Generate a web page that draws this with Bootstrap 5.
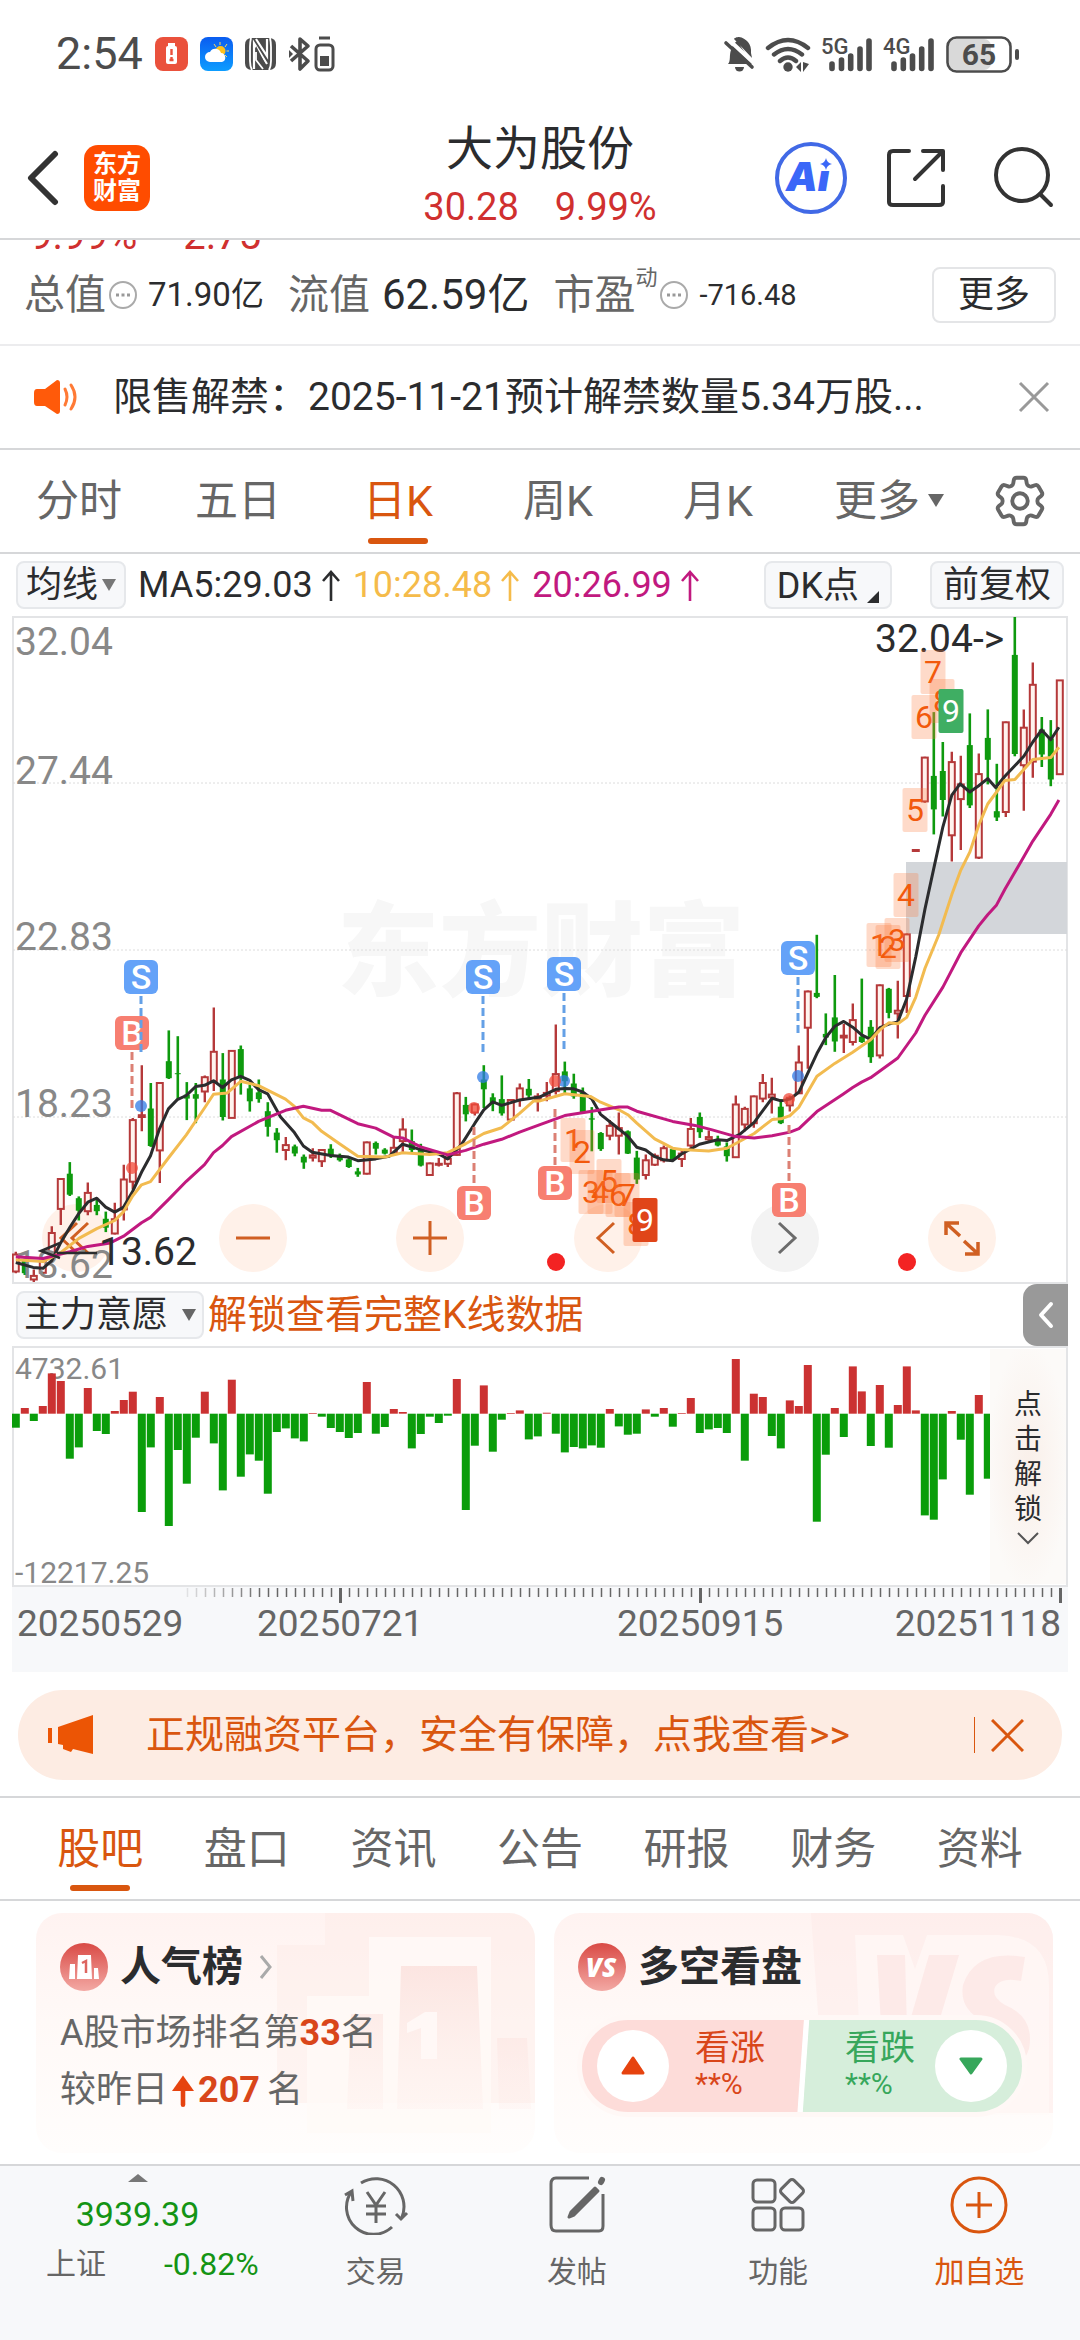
<!DOCTYPE html>
<html lang="zh-CN">
<head>
<meta charset="utf-8">
<meta name="viewport" content="width=device-width, initial-scale=1">
<title>大为股份 30.28 9.99%</title>
<link href="https://cdn.jsdelivr.net/npm/bootstrap@5.3.0/dist/css/bootstrap.min.css" rel="stylesheet">
<style>
:root{--ink:#2b2c2e;--mute:#666;--brand:#d9560f;--up:#d0302f;--down:#149414;--line:#d6d7d9}
body{font-family:Roboto,"Noto Sans CJK SC",sans-serif;color:var(--ink);background:#fff;font-size:36px;line-height:46px}
svg{display:block;flex:none}
button,a{background:none;border:0;padding:0;color:inherit;text-decoration:none;font:inherit}
.rule{border-bottom:2px solid var(--line)}
.up{color:var(--up)}.down{color:var(--down)}.brand{color:var(--brand)}.mute{color:var(--mute)}
.gap-l12{margin-left:12px}.gap-l16{margin-left:16px}.gap-l32{margin-left:32px}.gap-l38{margin-left:38px}.gap-l52{margin-left:52px}
.status{padding:34px 60px 32px 56px;color:#4c4c4c;font-size:45px;line-height:40px}
.topbar{display:grid;grid-template-columns:1fr auto 1fr;align-items:center;padding:14px 26px 2px;height:134px}
.topbar .name{font-size:47px;line-height:58px}
.topbar .quote{font-size:38px;line-height:58px;gap:36px}
.applogo{width:66px;height:66px;border-radius:14px;background:#ff4c00;color:#fff;font-size:24px;font-weight:700;line-height:27px;padding-top:6px;text-align:center}
.peek{height:14px;overflow:hidden;padding-left:30px;gap:46px;font-size:40px;line-height:36px}
.stats{padding:0 24px 8px;height:90px}
.stats .lbl{font-size:41px;color:var(--mute)}
.stats sup{font-size:22px;line-height:24px;top:-24px;color:var(--mute)}
.tipdot{margin:0 10px 0 2px}
.s28{font-size:29px}.s33{font-size:33px}.s42{font-size:42px}
.outbtn{border:2px solid #e4e5e7;border-radius:8px;width:124px;height:56px;font-size:36px;line-height:50px}
.notice{height:106px;padding:0 30px 0 33px;font-size:39px;border-top:2px solid #ececee}
.ktabs{display:grid;grid-template-columns:158fr 160fr 160fr 160fr 160fr 182fr 80fr;height:104px;padding-right:20px;font-size:43px;align-items:center;justify-items:center;color:var(--mute)}
.tabitem{position:relative;line-height:102px}
.tabitem.on{color:var(--brand)}
.tabitem.on::after{content:"";position:absolute;left:50%;bottom:8px;width:60px;height:6px;margin-left:-30px;border-radius:3px;background:var(--brand)}
.chip{background:#f7f8fa;border:2px solid #e6e8eb;border-radius:8px;height:48px;line-height:42px;font-size:36px;padding:0 8px}
.chip.wide{padding:0 11px}
.marow{height:62px;padding:0 16px;font-size:36px}
.ma10{color:#f5bb4a}.ma20{color:#c1197f}
.panel{margin:0 12px;position:relative}
.panel>svg{position:relative;pointer-events:none;width:100%;height:auto}
.ctl{position:absolute;left:30px;right:72px;bottom:12px;display:flex;justify-content:space-between}
.ctl button{width:68px;height:68px;border-radius:50%;background:#fff1e9;color:#d05f22}
.ctl button svg{width:68px;height:68px}
.ctl button.off{background:#f3f3f3;color:#6b6b6b}
.subrow{height:62px;padding-left:16px;font-size:39px}
.subrow .chip{gap:14px;padding:0 6px}
.drawer{width:45px;height:62px;background:#999;border-radius:14px 0 0 14px;display:grid;place-items:center;margin-right:12px}
.unlock{position:absolute;right:2px;top:3px;bottom:3px;width:76px;background:radial-gradient(ellipse at 50% 50%,#f9efe9,#fcfaf8 75%);font-size:28px;line-height:35px;display:flex;flex-direction:column;align-items:center;justify-content:center}
.unlock span{width:28px;word-break:break-all}
.promo{margin:18px 18px 16px;height:90px;border-radius:45px;background:#fdece3;color:var(--brand);padding:0 38px 0 30px;font-size:39px}
.promo .bar{width:1px;height:36px;background:var(--brand)}
.sectabs{border-top:2px solid var(--line);padding:0 27px;height:105px;font-size:43px;color:var(--mute)}
.sectabs a{flex:1;text-align:center}
.tiles{padding:12px 27px 11px 36px;display:grid;grid-template-columns:1fr 1fr;gap:19px}
.tile{position:relative;border-radius:26px;overflow:hidden;height:240px;padding:30px 24px 0;background:linear-gradient(#fff3f1,#fff9f7 45%,#fffdfc)}
.tile .art{position:absolute;right:0;top:0}
.tile>*:not(.art){position:relative}
.tile h2{font-size:41px;font-weight:700;line-height:48px;margin:0 0 0 12px}
.tile p{margin:0;font-size:36px;line-height:57px;color:var(--mute)}
.tile .rank{margin-top:14px}
.tile p b{color:#d9461a}
.tile p .step{margin:0 7px 0 4px}
.vote{margin:24px 0 0 -1px;height:102px;border-radius:51px;border:5px solid #fff8f6;overflow:hidden;background:linear-gradient(94deg,#fddcd9 49.6%,#fff 49.8%,#fff 50.8%,#d6eedb 51%);width:450px;padding:0 15px;font-size:35px;line-height:36px}
.vote button{width:72px;height:72px;border-radius:50%;background:#fff;display:grid;place-items:center}
.vote .red{color:#d9461a;margin-left:26px}.vote .green{color:#37a75b;margin-right:20px}
.vote .pct{font-size:30px;line-height:34px;display:block}
.dock{border-top:2px solid var(--line);background:#f7f8fa;height:176px;color:var(--mute);font-size:30px}
.dock .item{flex:1;display:flex;flex-direction:column;align-items:center;padding-top:9px;gap:14px}
.dock .index{width:275px;padding-top:8px;line-height:38px}
.dock .level{font-size:34px;margin:13px 0 12px}
.dock .change{font-size:32px}
.dock .pair{padding-left:46px;gap:58px}
</style>
<script src="https://cdn.jsdelivr.net/npm/bootstrap@5.3.0/dist/js/bootstrap.bundle.min.js"></script>
</head>
<body>
<div class="status d-flex align-items-center justify-content-between">
  <div class="d-flex align-items-center">
    <span>2:54</span>
    <svg class="gap-l12" width="33" height="34" viewBox="0 0 33 34"><rect width="33" height="34" rx="8" fill="#ea513c"/><rect x="13" y="6" width="7" height="3" fill="#fff"/><rect x="11" y="9" width="11" height="18" rx="2" fill="#fff"/><path d="M16.500 12v6M16.500 20v2M14.500 23h4" stroke="#ea513c" stroke-width="2.400"/></svg>
    <svg class="gap-l12" width="33" height="34" viewBox="0 0 33 34"><defs><linearGradient id="sky" x2="0" y2="1"><stop stop-color="#0a5cf0"/><stop offset="1" stop-color="#0d9dff"/></linearGradient></defs><rect width="33" height="34" rx="8" fill="url(#sky)"/><g stroke="#ffd75a" stroke-width="1"><path d="M20 5v3M14 7l2 3M27 7l-2 3M29 14h-2.500M27 20l-2-2"/></g><circle cx="20.500" cy="14" r="5" fill="#ffc21c"/><path d="M10 25a5 5 0 0 1 0-10 6 6 0 0 1 11 1 4.600 4.600 0 0 1 1 9z" fill="#fff"/></svg>
    <svg class="gap-l12" width="31" height="32" viewBox="0 0 31 32"><path d="M7 0h17q7 0 7 7v18q0 7-7 7H7q-7 0-7-7V7q0-7 7-7z" fill="#4c4c4c"/><path d="M6 0q-1 4-1 9v14q0 5 2 9M25 0q1 4 1 9v14q0 5-2 9" stroke="#fff" stroke-width="1.800" fill="none"/><path d="M9 31V5l13 21M22 1v17L11 1" fill="none" stroke="#fff" stroke-width="2.200"/><path d="M11 8v8l9 15h3z" fill="#4c4c4c"/><path d="M11 14v8l7 9" fill="none" stroke="#fff" stroke-width="1.800"/></svg>
    <svg class="gap-l12" width="48" height="36" viewBox="0 0 48 36" fill="none" stroke="#4c4c4c" stroke-width="3.600" stroke-linejoin="round"><path d="M3 10l17 15-8 8V3l8 7-17 15"/><path d="M1 14l4 4-4 4z" fill="#4c4c4c" stroke="none"/><rect x="28" y="9" width="17" height="25" rx="4" stroke-width="3"/><path d="M31 2h11" stroke-width="3"/><rect x="32" y="20" width="9" height="10" fill="#4c4c4c" stroke="none"/></svg>
  </div>
  <svg width="298" height="38" viewBox="721 34 298 38" fill="#4c4c4c"><path d="M727 63c3-3 1-9 3-14 1-4 3-7 6-9l13 19c1 2 2 3 2 4zM733 38c0-1 3-2 5-2 7 1 13 7 12 16l1 5z"/><path d="M734 66h9a4 4 0 0 1-9 0z"/><path d="M727 38l28 26" stroke="#fff" stroke-width="4"/><path d="M725 42l26 24" stroke="#4c4c4c" stroke-width="3.600" stroke-linecap="round"/>
  <g fill="none" stroke="#4c4c4c" stroke-width="4.400" stroke-linecap="round"><path d="M767 47q20-16 40 0M773 53.500q14-11 28 0M779 60q8-7 16 0"/></g><circle cx="787" cy="66" r="4.700"/><path d="M795 66l5-5v10zM802 61v10l6-8z"/>
  <text x="820" y="53" font-size="22" font-weight="500">5G</text><text x="882" y="53" font-size="22" font-weight="500">4G</text>
  <g stroke="#4c4c4c" stroke-width="5.600" stroke-linecap="round"><path d="M831 63v4.500M840.500 59v8.500M849.700 55v12.500M859 48v19.500M868 40v27.500M893 63v4.500M902.300 59v8.500M911.500 55v12.500M920.700 48v19.500M930 40v27.500"/></g>
  <rect x="948" y="38" width="42" height="31" rx="7" fill="#d9d9d9"/><rect x="946.500" y="36.500" width="63" height="34" rx="9" fill="none" stroke="#4c4c4c" stroke-width="2.600"/><rect x="1014" y="48" width="4" height="11" rx="2"/><text x="978" y="64" font-size="30" font-weight="700" text-anchor="middle">65</text></svg>
</div>

<header class="topbar rule">
  <div class="d-flex align-items-center">
    <button aria-label="返回"><svg width="34" height="56" viewBox="0 0 34 56" fill="none" stroke="#333" stroke-width="6" stroke-linecap="round" stroke-linejoin="round"><path d="M29 4L5 28l24 24"/></svg></button>
    <div class="applogo ms-4">东方<br>财富</div>
  </div>
  <div class="text-center">
    <div class="name">大为股份</div>
    <div class="quote up d-flex justify-content-center"><span>30.28</span><span>9.99%</span></div>
  </div>
  <div class="d-flex align-items-center justify-content-end">
    <button aria-label="AI"><svg width="74" height="74" viewBox="0 0 74 74"><circle cx="37" cy="37" r="34" fill="none" stroke="#4169e6" stroke-width="4"/><text x="12" y="50" font-family="Inter" font-weight="900" font-style="italic" font-size="40" fill="#3a67f8">Ai</text><rect x="44" y="17" width="18" height="13" fill="#fff"/><path d="M52 17q1 5 6 6-5 1-6 6-1-5-6-6 5-1 6-6z" fill="#3a67f8"/></svg></button>
    <button class="gap-l38" aria-label="分享"><svg width="60" height="60" viewBox="0 0 60 60" fill="none" stroke="#333" stroke-width="4" stroke-linecap="round" stroke-linejoin="round"><path d="M23 3H7q-4 0-4 4v47q0 3 4 3h46q4 0 4-3V38M37 3h20v19M56 4L29 31"/></svg></button>
    <button class="ms-5" aria-label="搜索"><svg width="60" height="62" viewBox="1 0 60 62" fill="none" stroke="#333" stroke-width="4" stroke-linecap="round"><circle cx="29" cy="28" r="26"/><path d="M47 47l11 11"/></svg></button>
  </div>
</header>

<div class="peek up d-flex align-items-end"><span>9.99%</span><span>2.75</span></div>

<div class="stats d-flex align-items-center">
  <span class="lbl">总值</span><svg class="tipdot" width="30" height="30" viewBox="0 0 30 30"><circle cx="15" cy="15" r="13" fill="none" stroke="#aaa" stroke-width="2"/><path d="M8 15h3M13.500 15h3M19 15h3" stroke="#999" stroke-width="3"/></svg><span class="s33">71.90亿</span>
  <span class="lbl ms-4">流值</span><span class="s42 gap-l12">62.59亿</span>
  <span class="lbl ms-4">市盈<sup>动</sup></span><svg class="tipdot" width="30" height="30" viewBox="0 0 30 30"><circle cx="15" cy="15" r="13" fill="none" stroke="#aaa" stroke-width="2"/><path d="M8 15h3M13.500 15h3M19 15h3" stroke="#999" stroke-width="3"/></svg><span class="s28">-716.48</span>
  <button class="outbtn ms-auto">更多</button>
</div>
<div class="notice rule d-flex align-items-center">
  <svg width="48" height="38" viewBox="0 0 48 38"><path d="M4 11h8L24 2q3 0 3 3v28q0 3-3 3L12 28H4q-3 0-3-4v-9q0-4 3-4z" fill="#ff5a0a"/><path d="M32 11q4 8 0 16M38 7q8 12 0 24" fill="none" stroke="#ff7a35" stroke-width="3" stroke-linecap="round"/></svg>
  <span class="text-truncate gap-l32">限售解禁：2025-11-21预计解禁数量5.34万股...</span>
  <button class="ms-auto" aria-label="关闭"><svg width="32" height="32" viewBox="0 0 32 32" stroke="#999" stroke-width="3"><path d="M2 2l28 28M30 2L2 30"/></svg></button>
</div>

<nav class="ktabs rule">
  <a class="tabitem" href="#">分时</a><a class="tabitem" href="#">五日</a><a class="tabitem on" href="#">日K</a><a class="tabitem" href="#">周K</a><a class="tabitem" href="#">月K</a>
  <a class="tabitem d-flex align-items-center gap-2" href="#">更多<svg width="16" height="14" viewBox="0 0 16 14"><path d="M0 0h16L8 13z" fill="#666"/></svg></a>
  <button aria-label="设置"><svg width="62" height="62" viewBox="0 0 24 24" fill="none" stroke="#666" stroke-width="1.500"><path d="M9.594 3.940c.09-.542.56-.94 1.110-.94h2.593c.55 0 1.020.398 1.110.94l.213 1.281c.063.374.313.686.645.87.074.04.147.083.22.127.325.196.72.257 1.075.124l1.217-.456a1.125 1.125 0 0 1 1.370.49l1.296 2.247a1.125 1.125 0 0 1-.26 1.431l-1.003.827c-.293.241-.438.613-.43.992a7.723 7.723 0 0 1 0 .255c-.008.378.137.75.43.991l1.004.827c.424.35.534.955.26 1.430l-1.298 2.247a1.125 1.125 0 0 1-1.369.491l-1.217-.456c-.355-.133-.75-.072-1.076.124a6.470 6.470 0 0 1-.22.128c-.331.183-.581.495-.644.869l-.213 1.281c-.09.543-.56.94-1.110.94h-2.594c-.55 0-1.019-.398-1.110-.94l-.213-1.281c-.062-.374-.312-.686-.644-.87a6.520 6.520 0 0 1-.22-.127c-.325-.196-.72-.257-1.076-.124l-1.217.456a1.125 1.125 0 0 1-1.369-.49l-1.297-2.247a1.125 1.125 0 0 1 .26-1.431l1.004-.827c.292-.24.437-.613.43-.991a6.932 6.932 0 0 1 0-.255c.007-.38-.138-.751-.43-.992l-1.004-.827a1.125 1.125 0 0 1-.26-1.430l1.297-2.247a1.125 1.125 0 0 1 1.370-.491l1.216.456c.356.133.751.072 1.076-.124.072-.044.146-.086.22-.128.332-.183.582-.495.644-.869l.214-1.280Z"/><circle cx="12" cy="12" r="3"/></svg></button>
</nav>

<div class="marow d-flex align-items-center">
  <button class="chip d-flex align-items-center gap-1">均线<svg width="14" height="12" viewBox="0 0 14 12"><path d="M0 0h14L7 12z" fill="#777"/></svg></button>
  <span class="gap-l12">MA5:29.03</span><svg class="ms-2" width="20" height="32" viewBox="0 0 20 32" fill="none" stroke="#2b2c2e" stroke-width="2.600"><path d="M10 32V3M2 12l8-9 8 9"/></svg>
  <span class="gap-l12 ma10">10:28.48</span><svg class="ms-2" width="20" height="32" viewBox="0 0 20 32" fill="none" stroke="#f5bb4a" stroke-width="2.600"><path d="M10 32V3M2 12l8-9 8 9"/></svg>
  <span class="gap-l12 ma20">20:26.99</span><svg class="ms-2" width="20" height="32" viewBox="0 0 20 32" fill="none" stroke="#c1197f" stroke-width="2.600"><path d="M10 32V3M2 12l8-9 8 9"/></svg>
  <button class="chip wide ms-auto d-flex align-items-end">DK点<svg class="ms-2 mb-1" width="12" height="12" viewBox="0 0 12 12"><path d="M12 0v12H0z" fill="#2b2c2e"/></svg></button>
  <button class="chip wide gap-l38">前复权</button>
</div>

<section class="panel">
  <div class="ctl">
    <button aria-label="最早"><svg viewBox="0 0 68 68" fill="none" stroke="currentColor" stroke-width="3"><path d="M35 19L19 34l16 15M46 19L30 34l16 15"/></svg></button>
    <button aria-label="缩小"><svg viewBox="0 0 68 68" stroke="currentColor" stroke-width="3"><path d="M17 34h34"/></svg></button>
    <button aria-label="放大"><svg viewBox="0 0 68 68" stroke="currentColor" stroke-width="3"><path d="M17 34h34M34 17v34"/></svg></button>
    <button aria-label="向左"><svg viewBox="0 0 68 68" fill="none" stroke="currentColor" stroke-width="3"><path d="M40 19L24 34l16 15"/></svg></button>
    <button class="off" aria-label="向右"><svg viewBox="0 0 68 68" fill="none" stroke="currentColor" stroke-width="3"><path d="M28 19l16 15-16 15"/></svg></button>
    <button aria-label="全屏"><svg viewBox="0 0 68 68" fill="none" stroke="currentColor" stroke-width="3.500"><path d="M18 31V19h13M19 20l13 12M50 38v12H37M49 49L36 37"/></svg></button>
  </div>
  <svg id="kchart" viewBox="12 616 1056 668"></svg>
</section>

<div class="subrow d-flex align-items-center">
  <button class="chip d-flex align-items-center">主力意愿<svg width="14" height="12" viewBox="0 0 14 12"><path d="M0 0h14L7 12z" fill="#666"/></svg></button>
  <a class="brand ms-1" href="#">解锁查看完整K线数据</a>
  <button class="drawer ms-auto" aria-label="展开"><svg width="18" height="28" viewBox="0 0 18 28" fill="none" stroke="#fff" stroke-width="4" stroke-linecap="round" stroke-linejoin="round"><path d="M14 3L4 14l10 11"/></svg></button>
</div>

<section class="panel">
  <svg id="vchart" viewBox="12 1345 1056 241"></svg>
  <button class="unlock"><span>点击解锁</span><svg width="24" height="20" viewBox="0 0 24 20" fill="none" stroke="#555" stroke-width="2"><path d="M2 6l10 10L22 6"/></svg></button>
</section>
<section class="panel"><svg id="axis" viewBox="12 1586 1056 85"></svg></section>

<div class="promo d-flex align-items-center">
  <svg width="46" height="40" viewBox="0 0 46 40" fill="#ec5505"><path d="M10 12L45 0v39l-20-5-2 3-8-3v-4l-5-1zM0 13h4v15H0z"/></svg>
  <a class="gap-l52" href="#">正规融资平台，安全有保障，点我查看&gt;&gt;</a>
  <span class="bar ms-auto"></span>
  <button class="gap-l16" aria-label="关闭"><svg width="33" height="33" viewBox="0 0 33 33" stroke="#d9560f" stroke-width="3"><path d="M1 1l31 31M32 1L1 32"/></svg></button>
</div>

<nav class="sectabs rule d-flex">
  <a class="tabitem on" href="#">股吧</a><a class="tabitem" href="#">盘口</a><a class="tabitem" href="#">资讯</a><a class="tabitem" href="#">公告</a><a class="tabitem" href="#">研报</a><a class="tabitem" href="#">财务</a><a class="tabitem" href="#">资料</a>
</nav>

<div class="tiles">
  <div class="tile">
    <svg class="art" width="258" height="240" viewBox="0 0 258 240"><defs><linearGradient id="fade" x2="0" y2="1"><stop stop-color="#f9d5d0" stop-opacity=".55"/><stop offset="1" stop-color="#fde9e6" stop-opacity=".25"/></linearGradient></defs><path d="M48 0h210v190H0V32h48z" fill="#fdeae7" opacity=".45"/><path d="M30 83h62V24h122v196H30z" fill="#fffaf8" opacity=".8"/><path d="M124 53h76l6 143h-86zM74 101h32v95H70zM220 125h30l4 71h-32z" fill="url(#fade)"/><path d="M160 99v47h-16v-31l-14 5v-10l18-11z" fill="#fff8f6"/></svg>
    <div class="d-flex align-items-center">
      <svg width="48" height="48" viewBox="0 0 48 48"><defs><linearGradient id="badge" x2="0" y2="1"><stop stop-color="#d94a45"/><stop offset="1" stop-color="#f3a9a4"/></linearGradient></defs><circle cx="24" cy="24" r="24" fill="url(#badge)"/><path d="M18 12h13l1 24H17zM10 21h5v15H9zM34 25h4l1 11h-5z" fill="#fff"/><path d="M22 20l4-2v12" stroke="#dd6560" stroke-width="2.500" fill="none"/></svg>
      <h2>人气榜</h2>
      <svg class="gap-l16" width="14" height="26" viewBox="0 0 14 26" fill="none" stroke="#aaa" stroke-width="3"><path d="M2 2l9 11-9 11"/></svg>
    </div>
    <p class="rank">A股市场排名第<b>33</b>名</p>
    <p class="d-flex align-items-center">较昨日<svg class="ms-1" width="22" height="34" viewBox="0 0 24 34"><path d="M12 0l12 17H0z" fill="#e6430f"/><path d="M12 14v18" stroke="#e6430f" stroke-width="5" stroke-linecap="round"/></svg><b class="step">207</b>名</p>
  </div>
  <div class="tile">
    <svg class="art" width="242" height="240" viewBox="0 0 242 240"><path d="M0 0h242v200H14z" fill="#fdeae7" opacity=".5"/><path d="M44 22h48l12 34 12-34h72q50 2 50 50v130H52z" fill="#fffaf8" opacity=".6"/><path d="M66 42h28l2 76 22-76h30l-42 140H74zM214 44q-50-8-62 28-4 24 20 36 16 8 10 18-8 14-40 6l-6 34q66 14 82-30 6-32-24-44-14-8-10-18 6-10 26-6z" fill="#f9d5d0" opacity=".35"/></svg>
    <div class="d-flex align-items-center">
      <svg width="48" height="48" viewBox="0 0 48 48"><circle cx="24" cy="24" r="24" fill="url(#badge)"/><text x="23" y="34" font-size="26" font-weight="900" font-style="italic" fill="#fff" text-anchor="middle" font-family="Open Sans">VS</text></svg>
      <h2>多空看盘</h2>
    </div>
    <div class="vote d-flex align-items-center">
      <button aria-label="看涨"><svg width="24" height="20" viewBox="0 0 24 20"><path d="M12 2l10 15H2z" fill="#e6430f" stroke="#e6430f" stroke-width="3" stroke-linejoin="round"/></svg></button>
      <div class="red">看涨<span class="pct">**%</span></div>
      <div class="green ms-auto">看跌<span class="pct">**%</span></div>
      <button aria-label="看跌"><svg width="24" height="20" viewBox="0 0 24 20"><path d="M12 17L2 3h20z" fill="#37a75b" stroke="#37a75b" stroke-width="3" stroke-linejoin="round"/></svg></button>
    </div>
  </div>
</div>

<nav class="dock d-flex">
  <a class="index" href="#">
    <svg class="mx-auto" width="20" height="8" viewBox="0 0 20 8"><path d="M10 0l10 8H0z" fill="#777"/></svg>
    <div class="level down text-center">3939.39</div>
    <div class="pair d-flex"><span>上证</span><span class="change down">-0.82%</span></div>
  </a>
  <a class="item" href="#"><svg width="66" height="60" viewBox="0 0 66 60" fill="none" stroke="#666" stroke-width="3"><path d="M18 8A28 28 0 0 1 59 42M49 52A27 27 0 0 1 9 16M2 20l7-4 1 10M53 39l5 5 6-6M24 17l9 13 9-13M23 31h20M23 39h20M33 30v18"/></svg>交易</a>
  <a class="item" href="#"><svg width="60" height="60" viewBox="0 0 60 60" fill="none" stroke="#666" stroke-width="3"><path d="M42 3H9Q4 3 4 9v41q0 6 5 6h43q4 0 4-5V19"/><path d="M54 7l1-2" stroke-width="6" stroke-linecap="round"/><path d="M48 13L24 37l-2 5 5-2 24-24z" fill="#666" stroke-linejoin="round"/></svg>发帖</a>
  <a class="item" href="#"><svg width="60" height="60" viewBox="0 0 60 60" fill="none" stroke="#666" stroke-width="3"><rect x="5" y="5" width="22" height="22" rx="4"/><rect x="5" y="33" width="22" height="22" rx="4"/><rect x="33" y="33" width="22" height="22" rx="4"/><rect x="35" y="7" width="18" height="18" rx="3" transform="rotate(45 44 16)"/></svg>功能</a>
  <a class="item brand" href="#"><svg width="60" height="60" viewBox="0 0 60 60" fill="none" stroke="#d9560f" stroke-width="3"><circle cx="30" cy="30" r="27"/><path d="M17 30h26M30 17v26"/></svg>加自选</a>
</nav>

<script>
// candles: type (r rising, g falling), high, body top, body bottom, low
const K=`r1460,1466,1504,1508 g1475,1478,1508,1512 r1500,1514,1522,1528 r1475,1480,1507,1510 r1403,1418,1462,1465 r1297,1297,1364,1400 g1259,1285,1332,1335 g1336,1340,1368,1390 r1305,1328,1369,1378 g1343,1355,1369,1378 g1370,1386,1406,1416 r1350,1387,1419,1421 r1265,1298,1365,1390 r1160,1165,1303,1320 r1042,1154,1158,1190 g1082,1139,1223,1225 r1080,1082,1233,1306 g964,1033,1071,1073 g977,1060,1061,1118 g1080,1108,1117,1165 g1082,1107,1117,1172 r1065,1069,1101,1125 r913,1012,1078,1100 g1015,1074,1158,1166 r1010,1010,1160,1160 g998,1006,1071,1108 g1085,1094,1123,1146 g1074,1103,1118,1126 g1125,1145,1180,1202 g1183,1193,1210,1238 r1203,1221,1232,1255 g1220,1224,1240,1246 g1242,1247,1260,1274 r1228,1244,1249,1258 r1230,1232,1257,1270 g1219,1229,1244,1250 g1240,1246,1255,1258 g1250,1253,1270,1272 g1272,1280,1287,1292 r1213,1215,1285,1287 g1213,1216,1229,1242 g1228,1231,1240,1242 r1205,1227,1240,1242 r1161,1186,1212,1240 g1186,1212,1232,1240 g1218,1228,1267,1269 r1260,1262,1288,1290 r1250,1263,1265,1269 r1240,1252,1263,1270 r1102,1105,1243,1245 g1113,1131,1152,1168 r1128,1130,1148,1155 g1042,1074,1096,1138 g1105,1114,1128,1145 g1065,1118,1150,1155 r1118,1120,1164,1166 r1083,1094,1120,1135 g1073,1095,1110,1118 r1105,1112,1118,1146 r1080,1104,1110,1123 r951,1062,1100,1108 g1034,1056,1078,1105 g1061,1083,1112,1117 g1092,1104,1148,1150 g1136,1161,1164,1235 g1192,1194,1230,1234 r1165,1178,1200,1210 r1148,1183,1200,1242 g1188,1190,1240,1241 g1234,1249,1298,1308 r1242,1255,1288,1298 r1240,1245,1265,1268 r1222,1228,1255,1260 g1228,1230,1253,1255 r1232,1240,1252,1270 r1160,1185,1222,1228 g1148,1158,1192,1205 r1188,1203,1208,1213 g1200,1209,1222,1224 g1215,1224,1246,1258 r1110,1130,1248,1250 r1135,1140,1175,1190 r1110,1112,1172,1182 r1062,1082,1117,1125 r1070,1108,1114,1150 g1118,1135,1172,1174 r1110,1115,1132,1146 r998,1036,1105,1105 r875,877,958,1050 g750,880,889,892 g926,972,980,997 g840,935,989,1012 r950,976,980,1015 r904,941,990,998 g848,978,990,992 g941,956,1024,1037 r861,863,1020,1027 g869,871,925,937 r853,920,926,982 r747,749,887,925 r560,560,562,562 r351,353,451,454 g251,394,469,525 g318,383,448,485 r340,363,527,586 r349,413,446,560 g254,325,460,466 r344,390,577,580 g245,309,358,413 g367,473,487,495 r272,274,475,486 g38,123,345,350 r245,286,370,472 r140,190,362,398 g262,290,346,374 g269,310,402,417 r180,180,390,390`.split(' ');
const MA={
'#2b2c2e':['46,1484 96,1495 125,1497 150,1480 176,1440 203,1405 229,1374 255,1349 281,1340 307,1360 333,1371 359,1360 385,1325 411,1282 437,1245 463,1185 489,1140 515,1119 541,1110 568,1090 594,1087 620,1077 646,1092 672,1075 699,1067 725,1076 751,1097 777,1106 815,1158 855,1193 881,1223 907,1237 960,1244 1012,1248 1039,1256 1091,1252 1130,1246 1169,1219 1222,1231 1274,1241 1300,1252 1340,1220 1379,1172 1405,1142 1431,1124 1457,1132 1509,1120','0,1113 46,1096 72,1094 98,1095 124,1102 150,1117 176,1152 229,1185 255,1201 281,1226 307,1232 333,1247 359,1254 385,1256 411,1241 463,1219 516,1209 543,1211 580,1197 622,1170 674,1116 700,1122 726,1118 752,1102 804,1016 830,980 856,955 882,944 908,957 934,974 960,984 987,958 1013,950 1039,945 1065,893 1091,800 1118,692 1144,600 1170,508 1196,437 1220,412 1248,430 1274,416 1300,400 1323,420 1350,395 1405,350 1431,318 1457,291 1483,313 1507,285'],
'#f2bb50':['46,1478 125,1482 176,1462 229,1430 281,1408 333,1390 359,1370 385,1335 411,1310 437,1303 489,1250 541,1198 594,1138 620,1107 660,1104 699,1078 751,1088 829,1118 855,1134 881,1160 907,1170 934,1190 986,1218 1039,1246 1117,1248 1169,1238 1248,1242 1300,1238 1352,1218 1405,1195 1457,1182 1509,1150 1550,1122','0,1122 72,1106 146,1112 176,1125 229,1142 255,1153 281,1172 333,1207 385,1228 411,1231 490,1234 543,1228 622,1195 674,1164 700,1162 726,1155 752,1136 804,1067 856,1038 908,1013 960,985 987,963 1013,947 1039,949 1065,935 1091,890 1118,825 1158,750 1196,660 1222,605 1248,565 1274,505 1300,457 1326,430 1350,404 1379,402 1431,357 1483,353 1507,330'],
'#c1197f':['46,1471 125,1475 203,1460 255,1448 320,1440 359,1425 411,1395 437,1383 489,1343 541,1302 594,1265 620,1238 646,1222 672,1202 751,1168 829,1143 881,1134 934,1143 960,1143 1039,1173 1091,1183 1143,1203 1169,1205 1222,1225 1300,1243 1352,1233 1405,1219 1457,1208 1509,1192','0,1175 72,1155 146,1146 229,1136 255,1136 281,1145 385,1168 450,1177 500,1187 569,1202 622,1205 674,1200 726,1192 752,1184 804,1146 880,1107 908,1092 934,1080 960,1070 1039,1026 1091,970 1118,930 1170,867 1222,790 1274,730 1300,705 1326,683 1350,648 1405,575 1431,540 1483,480 1507,448']};
const Y=v=>600+v/2.24, f=v=>v.toFixed(1);
let s='<rect x="13" y="617" width="1054" height="666" fill="none" stroke="#e3e4e6" stroke-width="2"/>';
s+='<text x="541" y="988" text-anchor="middle" font-size="102" font-weight="900" fill="#f7f7f7">东方财富</text>';
[783,950,1117].forEach(y=>s+=`<path d="M13 ${y}H1067" stroke="#dcdcdc" stroke-dasharray="2 2"/>`);
s+='<rect x="906" y="862" width="161" height="72" fill="#d3d6da"/>';
K.forEach((k,i)=>{const [h,a,b,l]=k.slice(1).split(',').map(n=>Y(+n)),x=15.8+9*i;
 if(k[0]=='g') s+=`<path d="M${f(x)} ${f(h)}V${f(l)}" stroke="#0e9a0e" stroke-width="2.6"/><rect x="${f(x-3)}" y="${f(a)}" width="6" height="${f(Math.max(b-a,1))}" fill="#0e9a0e"/>`;
 else s+=`<path d="M${f(x)} ${f(h)}V${f(a)}M${f(x)} ${f(b)}V${f(l)}" stroke="#b5393a" stroke-width="2.4"/><rect x="${f(x-3)}" y="${f(a)}" width="6" height="${f(Math.max(b-a,1))}" fill="${b-a>2?'#fff3ee':'none'}" stroke="#b5393a" stroke-width="2"/>`;});
[['32.04',655],['27.44',784],['22.83',950],['18.23',1117],['13.62',1278]].forEach(t=>s+=`<text x="15" y="${t[1]}" font-size="39" fill="#888">${t[0]}</text>`);
for(const c in MA){const p=MA[c].map((q,j)=>q.split(' ').map(v=>{const [x,y]=v.split(',');return f(j*540+x/2.904)+','+f(Y(+y))}).join(' ')).join(' ');s+=`<polyline points="${p}" fill="none" stroke="${c}" stroke-width="3" stroke-linejoin="round"/>`;}
s+='<path d="M60 1243l-19 8 19 7M57 1253h40" fill="none" stroke="#2b2c2e" stroke-width="2.6"/><text x="99" y="1265" font-size="39" fill="#2b2c2e">13.62</text><text x="875" y="652" font-size="39" fill="#2b2c2e">32.04-&gt;</text>';
// buy and sell flags: letter, x, y, dash from, dash to, dot y
[['B',132,1033,1052,1109,1168],['S',141,977,996,1052,1106],['S',483,977,996,1052,1077],['B',474,1203,1127,1183,1108],['S',564,974,993,1049,1081],['B',555,1183,1109,1165,1081],['S',798,958,977,1033,1076],['B',789,1200,1125,1181,1099]].forEach(m=>{const q=m[0]=='S',c=q?'#64a2f8':'#f77f71';
 s+=`<path d="M${m[1]} ${m[3]}V${m[4]}" stroke="${q?'#64a0e6':'#dc8074'}" stroke-width="3" stroke-dasharray="8 4"/><circle cx="${m[1]}" cy="${m[5]}" r="6" fill="${q?'#2f7be6':'#f04a3a'}" fill-opacity=".75"/><rect x="${m[1]-17}" y="${m[2]-17}" width="34" height="34" rx="6" fill="${c}"/><text x="${m[1]}" y="${m[2]+12}" text-anchor="middle" font-size="34" font-weight="500" fill="#fff">${m[0]}</text>`;});
[[1,879,945],[2,888,947],[3,897,940],[4,906,895],[5,915,810],[6,924,717],[7,933,672],[8,942,701],[9,951,711,'#3fae63'],[1,573,1140],[2,582,1152],[3,591,1192],[4,600,1192],[5,609,1181],[6,618,1195],[7,627,1195],[8,636,1224],[9,645,1220,'#e04519']].forEach(n=>s+=`<rect x="${n[1]-12.5}" y="${n[2]-22}" width="25" height="44" rx="2" fill="${n[3]||'#fa7a3c'}" fill-opacity="${n[3]?1:.28}"/><text x="${n[1]}" y="${n[2]+11}" text-anchor="middle" font-size="32" fill="${n[3]?'#fff':'#f2590c'}">${n[0]}</text>`);
s+='<circle cx="556" cy="1262" r="9" fill="#f32323"/><circle cx="907" cy="1262" r="9" fill="#f32323"/>';
document.getElementById('kchart').innerHTML=s;

// main-force index, one value for each day
const V=[42,-17,22,-23,-121,-98,135,101,-77,52,61,-8,-41,-66,295,101,-50,337,109,210,72,-66,89,230,-102,189,122,141,240,55,44,74,83,-2,9,43,55,73,58,-95,60,40,-14,-5,104,61,9,28,6,-104,289,96,-85,114,18,-2,-10,77,68,-3,60,116,100,104,95,102,-14,38,63,60,-13,9,-17,39,-2,-47,58,47,43,58,-164,141,-60,-50,67,104,-40,-23,-146,324,123,-17,70,-142,-67,97,-86,102,-26,-142,-10,305,318,197,-8,78,243,-56,195];
s='<rect x="13" y="1346" width="1054" height="239" fill="none" stroke="#e3e4e6" stroke-width="2"/><g font-size="30" fill="#888"><text x="15" y="1378">4732.61</text><text x="15" y="1582">-12217.25</text></g>';
V.forEach((v,i)=>{const h=Math.abs(v)/3;s+=`<rect x="${f(11.8+9*i)}" y="${f(v<0?1412.7-h:1412.7)}" width="8" height="${f(h)}" fill="${v<0?'#cb3232':'#0a9d0a'}"/>`});
document.getElementById('vchart').innerHTML=s;

s='<rect x="12" y="1586" width="1056" height="85" fill="#f7f8fa"/>';
for(let i=0;i<=97;i++){const big=(i%40)==17,x=187.5+9*i;s+=`<path d="M${x} 1587v${big?15:9}" stroke="#666" stroke-width="${big?3:1.5}" opacity="${Math.min(1,.15+i*.1)}"/>`}
s+='<g font-size="37" fill="#666"><text x="17" y="1635">20250529</text><text x="257" y="1635">20250721</text><text x="617" y="1635">20250915</text><text x="1061" y="1635" text-anchor="end">20251118</text></g>';
document.getElementById('axis').innerHTML=s;
</script>
</body>
</html>
